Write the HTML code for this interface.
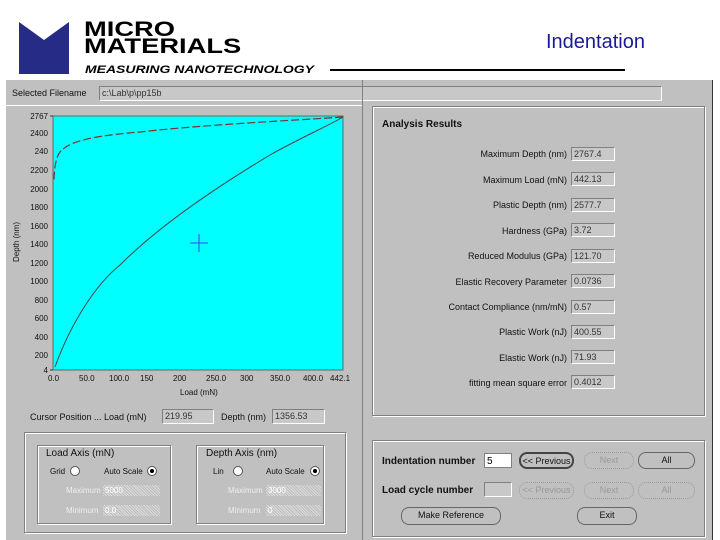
<!DOCTYPE html>
<html><head><meta charset="utf-8"><style>
body{margin:0;width:720px;height:540px;background:#fff;position:relative;overflow:hidden;font-family:"Liberation Sans",sans-serif;}
.a{position:absolute;}
.t{position:absolute;font-size:9px;color:#111;white-space:nowrap;}
.f{position:absolute;background:#c8c8c8;border:1px solid #fff;border-top-color:#808080;border-left-color:#808080;font-size:9px;color:#333;padding-left:2px;box-sizing:border-box;line-height:13px;}
.g{position:absolute;border:1px solid #808080;box-shadow:1px 1px 0 #fff, inset 1px 1px 0 #fff;}
.b{position:absolute;border:1px solid #444;border-radius:8px;font-size:9px;text-align:center;line-height:15px;color:#111;box-sizing:border-box;}
.d{border:1px dotted #999;color:#999;}
.r{position:absolute;width:10px;height:10px;border-radius:50%;background:#fff;border:1px solid #555;box-sizing:border-box;}
.dot{position:absolute;font-size:8px;background:repeating-linear-gradient(45deg,#ddd 0 1px,#bbb 1px 2px);color:#fff;padding-left:2px;box-sizing:border-box;line-height:11px;}
.yl{position:absolute;font-size:8px;color:#111;right:672px;}
</style></head><body>
<!-- logo -->
<svg class="a" style="left:19px;top:22px" width="50" height="52" viewBox="0 0 50 52"><path d="M0 0 L25 18 L50 0 L50 52 L0 52 Z" fill="#262b85"/></svg>
<div class="a" style="left:84px;top:21px;font-weight:bold;font-size:21px;line-height:17px;color:#000;transform:scaleX(1.3);transform-origin:left top">MICRO<br>MATERIALS</div>
<div class="a" style="left:85px;top:64px;font-weight:bold;font-style:italic;font-size:11px;color:#000;transform:scaleX(1.27);transform-origin:left top">MEASURING NANOTECHNOLOGY</div>
<div class="a" style="left:330px;top:69px;width:295px;height:2px;background:#000"></div>
<div class="a" style="left:546px;top:31px;font-size:20px;color:#1a1a99">Indentation</div>
<!-- app -->
<div class="a" style="left:6px;top:80px;width:706px;height:460px;background:#c0c0c0;border-right:1px solid #333"></div>
<div class="t" style="left:12px;top:88px">Selected Filename</div>
<div class="f" style="left:99px;top:86px;width:563px;height:15px;">c:\Lab\p\pp15b</div>
<div class="a" style="left:6px;top:105px;width:356px;height:1px;background:#fff"></div>
<!-- plot -->
<svg class="a" style="left:0;top:100px" width="362" height="300">
<rect x="53" y="16" width="290" height="254" fill="#00ffff" stroke="#666" stroke-width="1"/>
<path d="M55 267 C70 225 95 185 120 165 C160 125 220 85 270 55 C300 38 330 25 343 17" fill="none" stroke="#444" stroke-width="1"/>
<path d="M343 17 C300 20 200 25 140 32 C90 36 70 42 62 50 C56 54 54 70 54 80" fill="none" stroke="#733" stroke-width="1.2" stroke-dasharray="8 3"/>
<path d="M190 143 h18 M199 134 v18" stroke="#4040ff" stroke-width="1"/>
<g fill="none" stroke="#333"><path d="M50 16 h3 M50 270 h3"/></g>
</svg>
<div class="yl" style="top:112px">2767</div>
<div class="yl" style="top:129px">2400</div>
<div class="yl" style="top:147px">240</div>
<div class="yl" style="top:166px">2200</div>
<div class="yl" style="top:185px">2000</div>
<div class="yl" style="top:203px">1800</div>
<div class="yl" style="top:222px">1600</div>
<div class="yl" style="top:240px">1400</div>
<div class="yl" style="top:259px">1200</div>
<div class="yl" style="top:277px">1000</div>
<div class="yl" style="top:296px">800</div>
<div class="yl" style="top:314px">600</div>
<div class="yl" style="top:333px">400</div>
<div class="yl" style="top:351px">200</div>
<div class="yl" style="top:366px">4</div>
<div class="t" style="left:12px;top:262px;font-size:8px;transform:rotate(-90deg);transform-origin:left top">Depth (nm)</div>
<div class="t" style="left:48px;top:374px;font-size:8px">0.0</div>
<div class="t" style="left:79px;top:374px;font-size:8px">50.0</div>
<div class="t" style="left:109px;top:374px;font-size:8px">100.0</div>
<div class="t" style="left:140px;top:374px;font-size:8px">150</div>
<div class="t" style="left:173px;top:374px;font-size:8px">200</div>
<div class="t" style="left:206px;top:374px;font-size:8px">250.0</div>
<div class="t" style="left:240px;top:374px;font-size:8px">300</div>
<div class="t" style="left:270px;top:374px;font-size:8px">350.0</div>
<div class="t" style="left:303px;top:374px;font-size:8px">400.0</div>
<div class="t" style="left:330px;top:374px;font-size:8px">442.1</div>
<div class="t" style="left:180px;top:388px;font-size:8px">Load (mN)</div>
<div class="t" style="left:30px;top:412px">Cursor Position ... Load (mN)</div>
<div class="f" style="left:162px;top:409px;width:52px;height:15px">219.95</div>
<div class="t" style="left:221px;top:412px">Depth (nm)</div>
<div class="f" style="left:272px;top:409px;width:53px;height:15px">1356.53</div>
<div class="a" style="left:362px;top:80px;width:1px;height:460px;background:#808080"></div>
<!-- bottom left -->
<div class="g" style="left:24px;top:432px;width:320px;height:99px"></div>
<div class="g" style="left:37px;top:445px;width:132px;height:77px"></div>
<div class="g" style="left:196px;top:445px;width:126px;height:77px"></div>
<div class="t" style="left:46px;top:448px;font-size:10px">Load Axis (mN)</div>
<div class="t" style="left:206px;top:448px;font-size:10px">Depth Axis (nm)</div>
<div class="t" style="left:50px;top:467px;font-size:8px">Grid</div><div class="r" style="left:70px;top:466px"></div>
<div class="t" style="left:104px;top:467px;font-size:8px">Auto Scale</div><div class="r" style="left:147px;top:466px;background:radial-gradient(#000 35%,#fff 40%)"></div>
<div class="t" style="left:213px;top:467px;font-size:8px">Lin</div><div class="r" style="left:233px;top:466px"></div>
<div class="t" style="left:266px;top:467px;font-size:8px">Auto Scale</div><div class="r" style="left:310px;top:466px;background:radial-gradient(#000 35%,#fff 40%)"></div>
<div class="t" style="left:66px;top:486px;font-size:8px;color:#eee">Maximum</div><div class="dot" style="left:103px;top:485px;width:57px;height:11px">5000</div>
<div class="t" style="left:66px;top:506px;font-size:8px;color:#eee">Minimum</div><div class="dot" style="left:103px;top:505px;width:57px;height:11px">0.0</div>
<div class="t" style="left:228px;top:486px;font-size:8px;color:#eee">Maximum</div><div class="dot" style="left:266px;top:485px;width:55px;height:11px">3000</div>
<div class="t" style="left:228px;top:506px;font-size:8px;color:#eee">Minimum</div><div class="dot" style="left:266px;top:505px;width:55px;height:11px">0</div>
<!-- right results -->
<div class="g" style="left:372px;top:106px;width:331px;height:308px"></div>
<div class="t" style="left:382px;top:119px;font-size:10px;font-weight:bold;color:#111">Analysis Results</div>
<div class="t" style="right:153px;top:149px">Maximum Depth (nm)</div><div class="f" style="left:571px;top:147px;width:44px;height:14px">2767.4</div>
<div class="t" style="right:153px;top:175px">Maximum Load (mN)</div><div class="f" style="left:571px;top:172px;width:44px;height:14px">442.13</div>
<div class="t" style="right:153px;top:200px">Plastic Depth (nm)</div><div class="f" style="left:571px;top:198px;width:44px;height:14px">2577.7</div>
<div class="t" style="right:153px;top:226px">Hardness (GPa)</div><div class="f" style="left:571px;top:223px;width:44px;height:14px">3.72</div>
<div class="t" style="right:153px;top:251px">Reduced Modulus (GPa)</div><div class="f" style="left:571px;top:249px;width:44px;height:14px">121.70</div>
<div class="t" style="right:153px;top:277px">Elastic Recovery Parameter</div><div class="f" style="left:571px;top:274px;width:44px;height:14px">0.0736</div>
<div class="t" style="right:153px;top:302px">Contact Compliance (nm/mN)</div><div class="f" style="left:571px;top:300px;width:44px;height:14px">0.57</div>
<div class="t" style="right:153px;top:327px">Plastic Work (nJ)</div><div class="f" style="left:571px;top:325px;width:44px;height:14px">400.55</div>
<div class="t" style="right:153px;top:353px">Elastic Work (nJ)</div><div class="f" style="left:571px;top:350px;width:44px;height:14px">71.93</div>
<div class="t" style="right:153px;top:378px">fitting mean square error</div><div class="f" style="left:571px;top:375px;width:44px;height:14px">0.4012</div>
<!-- bottom right -->
<div class="g" style="left:372px;top:440px;width:331px;height:95px"></div>
<div class="t" style="left:382px;top:456px;font-size:10px;font-weight:bold">Indentation number</div>
<div class="a" style="left:484px;top:453px;width:28px;height:15px;background:#fff;border:1px solid #808080;font-size:10px;line-height:15px;padding-left:2px;box-sizing:border-box">5</div>
<div class="b" style="left:519px;top:452px;width:55px;height:17px;border-width:2px">&lt;&lt; Previous</div>
<div class="b d" style="left:584px;top:452px;width:50px;height:17px">Next</div>
<div class="b" style="left:638px;top:452px;width:57px;height:17px;border-color:#666">All</div>
<div class="t" style="left:382px;top:485px;font-size:10px;font-weight:bold">Load cycle number</div>
<div class="f" style="left:484px;top:482px;width:28px;height:15px"></div>
<div class="b d" style="left:519px;top:482px;width:55px;height:17px">&lt;&lt; Previous</div>
<div class="b d" style="left:584px;top:482px;width:50px;height:17px">Next</div>
<div class="b d" style="left:638px;top:482px;width:57px;height:17px">All</div>
<div class="b" style="left:401px;top:507px;width:100px;height:18px;border-color:#666">Make Reference</div>
<div class="b" style="left:577px;top:507px;width:60px;height:18px;border-color:#666">Exit</div>
</body></html>
